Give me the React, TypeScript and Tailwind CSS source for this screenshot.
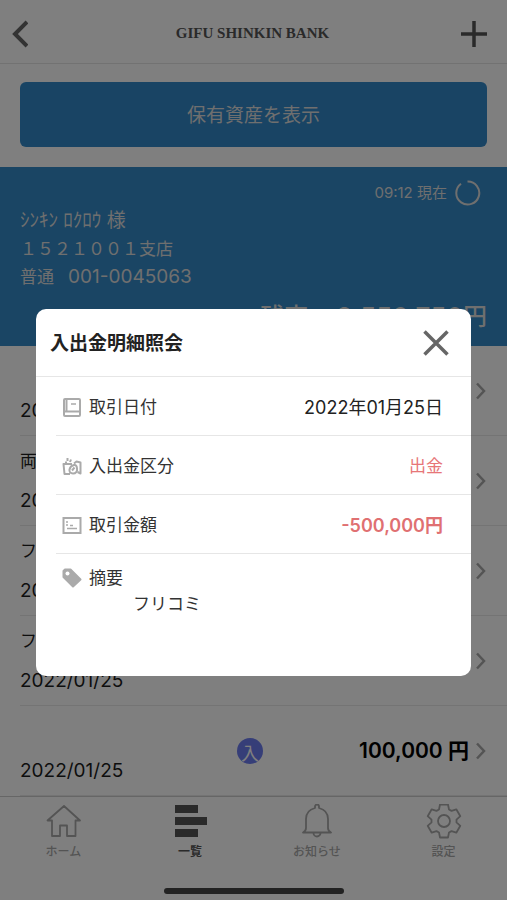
import { ReactNode } from "react";

type TransactionRowProps = {
	title?: string;
	date: string;
	amount?: string;
	kind?: string;
};

function TransactionRow({ title, date, amount, kind }: TransactionRowProps) {
	return (
		<li className="pl-5">
			<div className="relative grid h-[90px] grid-cols-[1fr_auto_auto] items-center border-b border-[#e8e8e8] pr-[18px]">
				<div className="leading-[22px] text-[#1c1c1c]">
					<div className="h-[22px] text-[17px]">{title}</div>
					<div className="mt-[18px] text-[19px]">{date}</div>
				</div>
				<span className="mr-1 text-[21px] font-semibold text-black">{amount}</span>
				<svg className="h-5 w-4" viewBox="0 0 16 20" fill="none" stroke="#a8a8a8" strokeWidth="2.500">
					<path d="M4 2.500l7 7.500-7 7.500" />
				</svg>
				{kind && (
					<span className="absolute left-[217px] top-8 flex size-[26px] items-center justify-center rounded-full bg-[#6c7cf0] pt-1 text-[18px] text-white">
						{kind}
					</span>
				)}
			</div>
		</li>
	);
}

type DetailRowProps = {
	icon: ReactNode;
	label: string;
	children: ReactNode;
};

function DetailRow({ icon, label, children }: DetailRowProps) {
	return (
		<div className="ml-5 flex h-[59px] items-center border-b border-[#e6e6e6] pl-[6px] pr-7 pt-1 text-[17px]">
			{icon}
			<dt className="ml-[7px] text-[#333]">{label}</dt>
			<dd className="ml-auto">{children}</dd>
		</div>
	);
}

type TabProps = {
	label: string;
	active?: boolean;
	children: ReactNode;
};

function Tab({ label, active, children }: TabProps) {
	return (
		<button
			className={
				active
					? "flex flex-col items-center gap-1 text-[12px] font-bold leading-4 text-[#555]"
					: "flex flex-col items-center gap-1 text-[12px] font-medium leading-4 text-[#a8a8a8]"
			}
		>
			<svg
				className="size-9"
				viewBox="0 0 36 36"
				fill="none"
				stroke="#a8a8a8"
				strokeWidth="1.800"
				strokeLinejoin="round"
			>
				{children}
			</svg>
			{label}
		</button>
	);
}

const transactions = [
	{ title: "", date: "2022/01/25" },
	{ title: "両替", date: "2022/01/25" },
	{ title: "フリコミ", date: "2022/01/25" },
	{ title: "フリコミ", date: "2022/01/25" },
	{ title: "", date: "2022/01/25", amount: "100,000 円", kind: "入" },
];

export default function App() {
	return (
		<div className="relative flex min-h-screen flex-col bg-white font-[Inter,'Noto_Sans_CJK_JP',sans-serif]">
			{/* Header */}
			<header className="flex h-16 items-center justify-between border-b border-[#e4e4e4] px-3 pt-1">
				<button aria-label="戻る">
					<svg className="h-7 w-4" viewBox="0 0 16 28" fill="none" stroke="#666" strokeWidth="4">
						<path d="M15 2L3 14l12 12" />
					</svg>
				</button>
				<h1 className="pl-4 font-['Liberation_Serif',serif] text-[15px] font-bold text-[#555]">
					GIFU SHINKIN BANK
				</h1>
				<button aria-label="追加" className="mr-2">
					<svg className="size-[26px]" viewBox="0 0 26 26" stroke="#555" strokeWidth="3.500">
						<path d="M0 13h26M13 0v26" />
					</svg>
				</button>
			</header>

			<div className="px-5 pb-5 pt-[18px]">
				<button className="h-[65px] w-full rounded-md bg-[#3388c8] pt-1 text-[19px] text-[#dedede]">
					保有資産を表示
				</button>
			</div>

			{/* Account summary */}
			<section className="h-[179px] bg-[#358bc8] px-5 pt-3 text-[#dedede]">
				<div className="flex items-center justify-end gap-2 pr-[6px] text-[15px] leading-7">
					<span>09:12 現在</span>
					<svg className="size-[26px]" viewBox="0 0 26 26" fill="none" stroke="#dedede" strokeWidth="2">
						<path d="M12.500 1.500A11.500 11.500 0 1 1 6 3.700" />
					</svg>
				</div>
				<div className="text-[17px] leading-7">
					<p className="text-[19px] leading-7">ｼﾝｷﾝ ﾛｸﾛｳ 様</p>
					<p>１５２１００１支店</p>
					<p className="flex gap-[14px]">
						<span>普通</span>
						<span className="text-[19px]">001-0045063</span>
					</p>
				</div>
				<p className="mt-[6px] flex items-center justify-end text-[24px] font-medium leading-10">
					<span className="mr-7">残高</span>
					<span className="text-[26px]">2,550,750</span>
					<span>円</span>
				</p>
			</section>

			{/* Transactions */}
			<ul className="flex-1">
				{transactions.map((t, i) => (
					<TransactionRow key={i} {...t} />
				))}
			</ul>

			{/* Tab bar */}
			<nav className="h-[104px] border-t border-[#ccc] bg-white">
				<div className="grid grid-cols-4 pt-[7px]">
					<Tab label="ホーム">
						<path d="M19 2L2.500 16.500H7V32h8V21.500h7V32h8.500V16.500H35z" />
					</Tab>
					<Tab label="一覧" active>
						<path d="M3 1h23v8H3zM3 13h32v8H3zM3 25h23v8H3z" fill="#555" stroke="none" />
					</Tab>
					<Tab label="お知らせ">
						<path d="M16 4V2.500a2 2 0 0 1 4 0V4c6 1.500 9 6 9 11v9c0 2 1 3.500 3 4.500H4c2-1 3-2.500 3-4.500v-9c0-5 3-9.500 9-11z" />
						<path d="M14.500 29a3.500 3.500 0 0 0 7 0" />
					</Tab>
					<Tab label="設定">
						<path
							transform="translate(18 17)"
							d="M-4-16.500H4L5-11.500 7.500-10.100 12.300-11.700 16.300-4.800 12.500-1.400V1.400L16.300 4.800 12.300 11.700 7.500 10.100 5 11.500 4 16.500H-4L-5 11.500-7.500 10.100-12.300 11.700-16.300 4.800-12.500 1.400V-1.400L-16.300-4.800-12.300-11.700-7.500-10.100-5-11.500z"
						/>
						<circle cx="18" cy="17" r="6" />
					</Tab>
				</div>
				<div className="mx-auto mt-7 h-[6px] w-[180px] rounded-full bg-[#444]" />
			</nav>

			{/* Overlay */}
			<div className="absolute inset-0 flex items-start justify-center bg-black/50 px-9 pt-[309px]">
				<div role="dialog" aria-label="入出金明細照会" className="h-[367px] w-full rounded-[10px] bg-white">
					<div className="flex h-[68px] items-center justify-between border-b border-[#e6e6e6] pl-[14px] pr-[22px]">
						<h2 className="pt-1 text-[19px] font-bold text-[#222]">入出金明細照会</h2>
						<button aria-label="閉じる">
							<svg className="size-[26px]" viewBox="0 0 26 26" stroke="#666" strokeWidth="3.500">
								<path d="M1.500 1.500l23 23M24.500 1.500l-23 23" />
							</svg>
						</button>
					</div>
					<dl>
						<DetailRow
							label="取引日付"
							icon={
								<svg className="size-5" viewBox="0 0 20 20" fill="none" stroke="#aaa" strokeWidth="2">
									<rect x="2" y="1" width="16" height="17" rx="1" />
									<path d="M2 13.500h16M4.500 2v12" />
									<path d="M9 6h5" strokeWidth="1.500" />
								</svg>
							}
						>
							<span className="text-[18px] text-[#222]">2022年01月25日</span>
						</DetailRow>
						<DetailRow
							label="入出金区分"
							icon={
								<svg
									className="size-5"
									viewBox="0 0 20 20"
									fill="none"
									stroke="#aaa"
									strokeWidth="2"
									strokeLinejoin="round"
								>
									<path d="M8 17H2.500L1.500 7H10M4 7V4.500M5.500 4V1M8 5l1-2.500M12 6.500l2.500-2 4 1v11l-3-1.500" />
									<path d="M15 11.500a4 4 0 0 1-4 5c-2.500 0-4-1.500-3.500-4S10 8.500 12 8s3 1.500 3 3.500z" />
									<path d="M10 13.500l2.500-3" />
								</svg>
							}
						>
							<span className="text-[#e77678]">出金</span>
						</DetailRow>
						<DetailRow
							label="取引金額"
							icon={
								<svg className="size-5" viewBox="0 0 20 20" fill="none" stroke="#aaa" strokeWidth="2">
									<path d="M1.500 2h17v15h-17z" />
									<path d="M5 5v2M5 8v2M5 12.500h10M8 9.500h3" strokeWidth="1.500" />
								</svg>
							}
						>
							<span className="text-[18px] font-semibold text-[#e07072]">-500,000円</span>
						</DetailRow>
						<div className="ml-5 pl-[6px] pt-[11px] text-[17px] leading-[26px]">
							<dt className="flex items-center gap-[7px] text-[#333]">
								<svg className="size-5" viewBox="0 0 20 20">
									<path
										d="M3 1.500h5.500L18.500 11.500l-7.500 7L1.500 9V3z"
										fill="#aaa"
										stroke="#aaa"
										strokeWidth="2"
										strokeLinejoin="round"
									/>
									<circle cx="5.500" cy="5.500" r="2" fill="white" />
								</svg>
								摘要
							</dt>
							<dd className="pl-[71px] text-[#333]">フリコミ</dd>
						</div>
					</dl>
				</div>
			</div>
		</div>
	);
}
